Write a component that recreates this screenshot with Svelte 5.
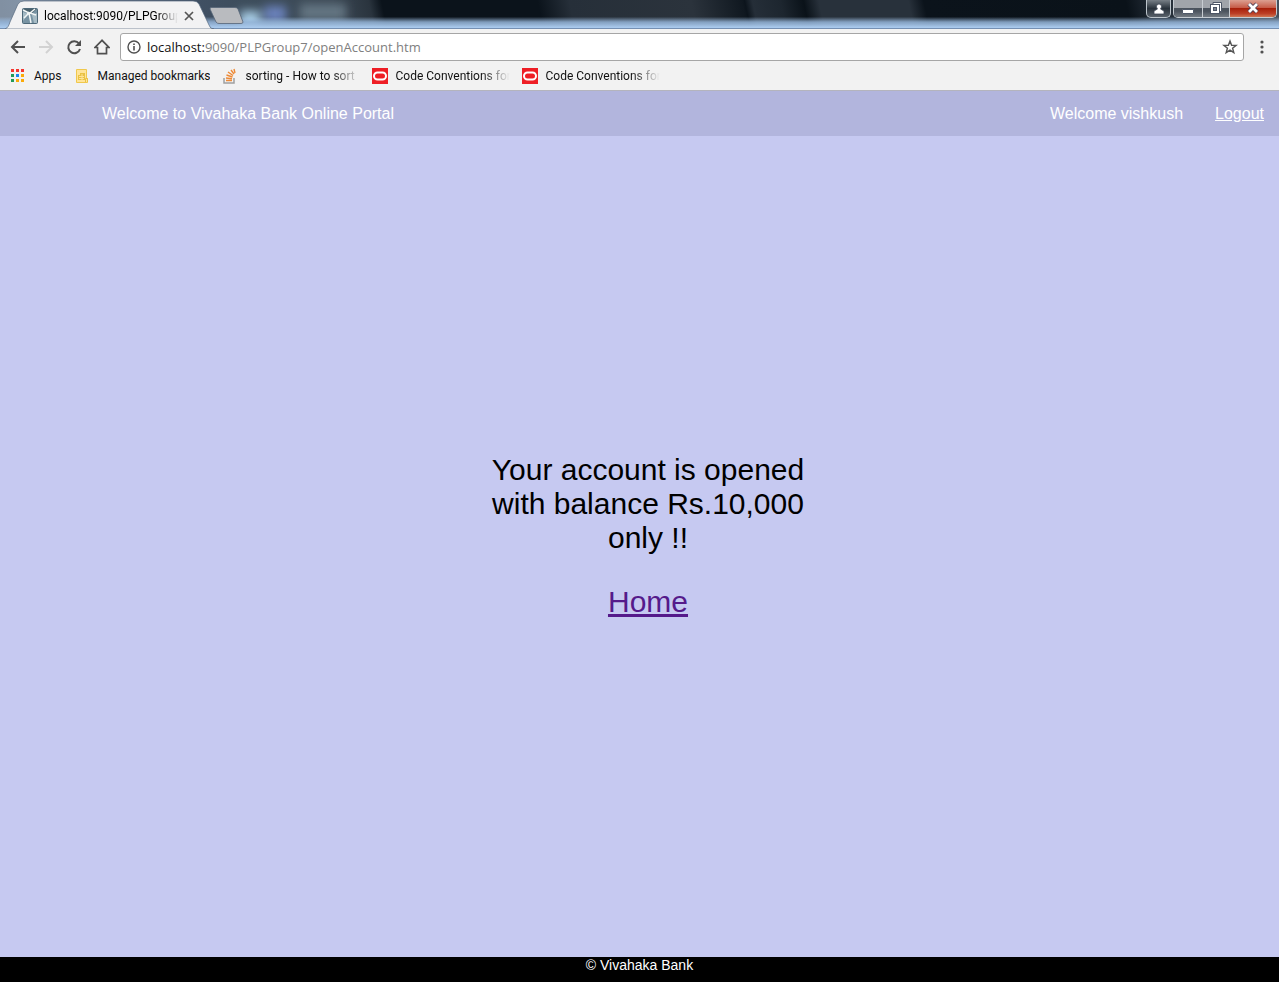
<script>
  const dots = ['#f5352f', '#f5352f', '#f5352f', '#229a58', '#1a86f0', '#fbaa08', '#229a58', '#fbaa08', '#fbaa08'];
  const bookmarks = [
    { label: 'Apps', icon: 'apps', kind: 'first' },
    { label: 'Managed bookmarks', icon: 'folder', kind: 'managed' },
    { label: 'sorting - How to sort', icon: 'stack', kind: 'faded' },
    { label: 'Code Conventions for', icon: 'oracle', kind: 'faded' },
    { label: 'Code Conventions for', icon: 'oracle', kind: 'faded' }
  ];
</script>

<div class="window">
  <div class="titlebar">
    <svg class="glass" viewBox="0 0 1279 29" preserveAspectRatio="none" aria-hidden="true">
      <defs>
        <linearGradient id="sky" gradientUnits="userSpaceOnUse" x1="0" x2="1279" y1="0" y2="0" gradientTransform="skewX(12)">
          <stop offset="0" stop-color="#8190a2" /><stop offset=".02" stop-color="#8494a7" />
          <stop offset=".15" stop-color="#405064" /><stop offset=".19" stop-color="#3d4d5c" />
          <stop offset=".26" stop-color="#3b4854" /><stop offset=".288" stop-color="#2a343e" />
          <stop offset=".298" stop-color="#0b131b" />
          <stop offset=".42" stop-color="#0b131b" /><stop offset=".445" stop-color="#262f39" />
          <stop offset=".54" stop-color="#2b333c" /><stop offset=".58" stop-color="#101820" />
          <stop offset=".582" stop-color="#0c141c" /><stop offset=".588" stop-color="#252e38" />
          <stop offset=".61" stop-color="#1d262f" /><stop offset=".628" stop-color="#0a1219" />
          <stop offset=".64" stop-color="#28313b" /><stop offset=".71" stop-color="#28313b" />
          <stop offset=".722" stop-color="#0b131b" /><stop offset=".88" stop-color="#0a1219" />
          <stop offset=".9" stop-color="#222b35" />
          <stop offset="1" stop-color="#46525e" />
        </linearGradient>
        <linearGradient id="edge" x1="0" x2="0" y1="0" y2="1">
          <stop offset=".58" stop-color="#a3c3e7" stop-opacity="0" />
          <stop offset=".76" stop-color="#94b4d8" stop-opacity=".85" />
          <stop offset=".94" stop-color="#a9c9ec" />
        </linearGradient>
        <filter id="soft" x="-50%" y="-100%" width="200%" height="300%"><feGaussianBlur stdDeviation="5" /></filter>
      </defs>
      <rect width="1279" height="29" fill="url(#sky)" />
      <g filter="url(#soft)">
        <rect x="240" y="11" width="20" height="18" fill="#a5cae3" />
        <rect x="264" y="6" width="22" height="16" fill="#6b82bc" />
        <rect x="300" y="4" width="46" height="16" fill="#637482" />
      </g>
      <rect width="1279" height="29" fill="url(#edge)" />
      <path d="M0 28.5h1279" stroke="#7590b3" />
      <path d="M5 29C8 28 9 25 10 22L18 4Q20 1 24 1H193Q197 1 199 4L209 25Q210 29 214 29Z" fill="#f2f2f3" stroke="#56687e" stroke-width=".7" />
      <path d="M211 7.500H235Q237 7.500 238 9L243 22Q243 23.500 241 23.500H219Q217 23.500 216 22L210 9Q210 7.500 211 7.500Z" fill="#b9bbbf" stroke="#556477" stroke-width=".8" />
    </svg>
    <div class="tab">
      <svg width="16" height="16" viewBox="0 0 16 16" aria-hidden="true">
        <rect x=".5" y=".5" width="15" height="15" rx="1" fill="#7893a3" stroke="#4d6878" />
        <path d="M1 1h14L10 5 6 6Z" fill="#48606c" />
        <path d="M1 4 6 6 1 13ZM10 7 15 5v10h-3Z" fill="#a6bbc5" />
        <path d="M1 2 5 4 8 5 13 1M7 5 2 10M7 5 9 15M8 5l6 2M7 5l-2 1" fill="none" stroke="#f1f5f5" stroke-width="1.500" />
      </svg>
      <span class="tab-title">localhost:9090/PLPGroup</span>
      <button class="plain" aria-label="Close tab"><svg width="10" height="10" viewBox="0 0 10 10"><path d="m1 1 8 8m0-8L1 9" stroke="#555" stroke-width="1.700" /></svg></button>
    </div>
    <div class="window-buttons">
      <button class="profile" aria-label="Profile"><svg width="12" height="12" viewBox="0 0 12 12"><path d="M3.500 3.500a2.500 2.500 0 0 1 5 0c0 1-.5 2-1 2.500L11 8v3H1V8l3.500-2C4 5.500 3.500 4.500 3.500 3.500Z" fill="#fff" stroke="#3f4856" stroke-width=".8" /></svg></button>
      <div class="window-group">
        <button class="minimize" aria-label="Minimize"><svg width="14" height="14" viewBox="0 0 14 14"><rect x="1.500" y="7.500" width="11" height="4" rx=".5" fill="#fff" stroke="#505969" /></svg></button>
        <button class="restore" aria-label="Restore"><svg width="14" height="14" viewBox="0 0 14 14"><path d="M4 .5h8.500v9H4Z" fill="#fff" stroke="#4d5666" /><rect x="1.500" y="2.500" width="9" height="9" fill="#fff" stroke="#4d5666" /><rect x="4.500" y="5.500" width="3" height="3" fill="#7b8390" stroke="#4d5666" /></svg></button>
        <button class="close" aria-label="Close"><svg width="14" height="14" viewBox="0 0 14 14"><path d="M3 2 11 10M11 2 3 10" stroke="#4b3d54" stroke-width="4.500" /><path d="M3 2 11 10M11 2 3 10" stroke="#fff" stroke-width="2.800" /></svg></button>
      </div>
    </div>
  </div>

  <div class="toolbar">
    <nav class="navigation" aria-label="Browser">
      <button class="plain" aria-label="Back"><svg width="16" height="16" viewBox="0 0 16 16"><path d="M15 8H2m6-6L2 8l6 6" fill="none" stroke="#505050" stroke-width="2" /></svg></button>
      <button class="plain" aria-label="Forward" disabled><svg width="16" height="16" viewBox="0 0 16 16"><path d="M1 8h13M8 2l6 6-6 6" fill="none" stroke="#d2d2d2" stroke-width="2" /></svg></button>
      <button class="plain" aria-label="Reload"><svg width="16" height="16" viewBox="0 0 16 16"><path d="M13 4.500A6 6 0 1 0 14 10" fill="none" stroke="#505050" stroke-width="2" /><path d="M15 1v6H9Z" fill="#505050" /></svg></button>
      <button class="plain" aria-label="Browser home"><svg width="16" height="16" viewBox="0 0 16 16"><path d="M8 1.300 1 8.500H3.500v6.200h9V8.500H15Z" fill="none" stroke="#505050" stroke-width="1.700" /></svg></button>
    </nav>
    <div class="address">
      <svg width="14" height="14" viewBox="0 0 14 14" aria-hidden="true"><circle cx="7" cy="7" r="6" fill="none" stroke="#505050" stroke-width="1.400" /><path d="M7 6v4.500M7 3.500v1.500" stroke="#505050" stroke-width="1.600" /></svg>
      <span class="url"><b>localhost:</b>9090/PLPGroup7/openAccount.htm</span>
      <button class="plain" aria-label="Bookmark this page"><svg width="16" height="16" viewBox="0 0 16 16"><path d="m8 2 1.600 4.200 4.500.2-3.500 2.800 1.200 4.400L8 11.100l-3.800 2.500 1.200-4.400-3.500-2.800 4.500-.2Z" fill="none" stroke="#555" stroke-width="1.400" /></svg></button>
    </div>
    <button class="plain" aria-label="Browser menu"><svg width="16" height="16" viewBox="0 0 16 16"><g fill="#505050"><circle cx="8" cy="3" r="1.600" /><circle cx="8" cy="8" r="1.600" /><circle cx="8" cy="13" r="1.600" /></g></svg></button>
  </div>

  <nav class="bookmarks" aria-label="Bookmarks">
    {#each bookmarks as mark}
      <a href="#bookmark" class={mark.kind}>
        <svg width="16" height="16" viewBox="0 0 16 16" aria-hidden="true">
          {#if mark.icon === 'apps'}
            {#each dots as color, i}<rect x={1 + (i % 3) * 5} y={1 + Math.floor(i / 3) * 5} width="3" height="3" fill={color} />{/each}
          {:else if mark.icon === 'folder'}
            <path d="M2.500 1.500h10v9h1v4h-11Z" fill="#ffe499" stroke="#f0c84c" /><path d="M4 7h2V5h5v7H4Z" fill="#eac244" /><path d="M5 8.500h5M5 10.500h5M8 6v6" stroke="#ffe499" /><path d="M11.500 14v-3.500h2V14" fill="none" stroke="#eac244" />
          {:else if mark.icon === 'stack'}
            <path d="M2 10v5h10v-5" fill="none" stroke="#a0a0a0" stroke-width="1.500" /><path d="M4 12.500h6M4 10l6 .700M4.500 7l6 2M6 4l5 3.500M9 2l3 4M12 1l1 4" stroke="#ed8935" stroke-width="1.400" />
          {:else}
            <rect width="16" height="16" fill="#ee1e25" /><rect x="2" y="4.500" width="12" height="7" rx="3.500" fill="none" stroke="#fff" stroke-width="2" />
          {/if}
        </svg>
        <span>{mark.label}</span>
      </a>
    {/each}
  </nav>

  <header>
    <span>Welcome to Vivahaka Bank Online Portal</span>
    <div class="account"><span>Welcome vishkush</span><a href="#logout">Logout</a></div>
  </header>
  <main>
    <div class="message">
      <p>Your account is opened with balance Rs.10,000 only !!</p>
      <a href="#home">Home</a>
    </div>
  </main>
  <footer>© Vivahaka Bank</footer>
</div>

<style>
  :global(body) { margin: 0; }
  .window { box-sizing: border-box; min-height: 100vh; display: flex; flex-direction: column; background: #c6c9f1; font: 16px/18px "Liberation Sans", Arial, sans-serif; }
  svg { display: block; flex: none; }
  button { border: 0; margin: 0; padding: 0; font: inherit; }
  .plain { display: flex; background: none; }
  .titlebar { position: relative; display: flex; justify-content: space-between; height: 29px; overflow: hidden; font: 12px/16px Roboto, sans-serif; }
  .glass { position: absolute; inset: 0; width: 100%; height: 100%; }
  .tab { position: relative; display: flex; align-items: center; gap: 6px; width: 172px; padding: 2px 0 0 22px; }
  .tab-title { flex: 1; min-width: 0; overflow: hidden; white-space: nowrap; mask-image: linear-gradient(90deg, #000 84%, transparent); }
  .window-buttons { position: relative; display: flex; gap: 2px; height: 18px; padding-right: 2px; }
  .window-buttons button { display: flex; align-items: center; justify-content: center; background: linear-gradient(#a0a4aa 0 45%, #4b535d 46% 65%, #747b83); border-right: 1px solid #c8cdd2; }
  .window-buttons .profile { width: 25px; border: 1px solid #bdc5cc; border-top: 0; border-radius: 0 0 5px 5px; background: linear-gradient(#777f86, #29323b 50%, #59616a); }
  .window-group { display: flex; border: 1px solid #c6ccd2; border-top: 0; border-radius: 0 0 5px 5px; overflow: hidden; }
  .window-group .minimize { width: 29px; }
  .window-group .restore { width: 27px; }
  .window-group .close { width: 46px; border: 0; background: linear-gradient(#dca091, #c65c48 45%, #a51d08 47%, #bc3f26 80%, #cf7653); }
  .toolbar { display: flex; align-items: center; gap: 10px; padding: 4px 9px 0 10px; background: #f2f2f2; }
  .navigation { display: flex; gap: 12px; }
  .address { flex: 1; box-sizing: border-box; display: flex; align-items: center; gap: 6px; height: 28px; padding: 0 5px 0 6px; border: 1px solid #a6a6a6; border-radius: 3px; background: #fff; }
  .url { flex: 1; color: #808080; font: 13px/20px "Open Sans", sans-serif; }
  .url b { color: #111; font-weight: 400; }
  .bookmarks { display: flex; gap: 12px; align-items: center; height: 29px; padding-left: 10px; border-bottom: 1px solid #b4b4bd; background: #f2f2f2; }
  .bookmarks a { display: flex; align-items: center; gap: 8px; color: #111; text-decoration: none; font: 12px/16px Roboto, sans-serif; white-space: nowrap; }
  .bookmarks span { overflow: hidden; }
  .bookmarks .managed { width: 136px; }
  .bookmarks .faded { width: 138px; }
  .bookmarks .faded span { flex: 1; mask-image: linear-gradient(90deg, #000 75%, transparent); }
  header { display: flex; justify-content: space-between; padding: 14px 15px 13px 102px; color: #fff; background: #b2b5dd; }
  .account { display: flex; gap: 32px; }
  header a { color: inherit; }
  main { flex: 1; display: flex; align-items: center; justify-content: center; padding: 0 0 21px 17px; }
  .message { width: 320px; text-align: center; font-size: 30px; line-height: 34px; }
  .message p { margin: 0 0 30px; }
  .message a { color: #551a8b; }
  footer { box-sizing: border-box; min-height: 25px; text-align: center; color: #fff; background: #000; font-size: 14px; line-height: 17px; }
</style>
